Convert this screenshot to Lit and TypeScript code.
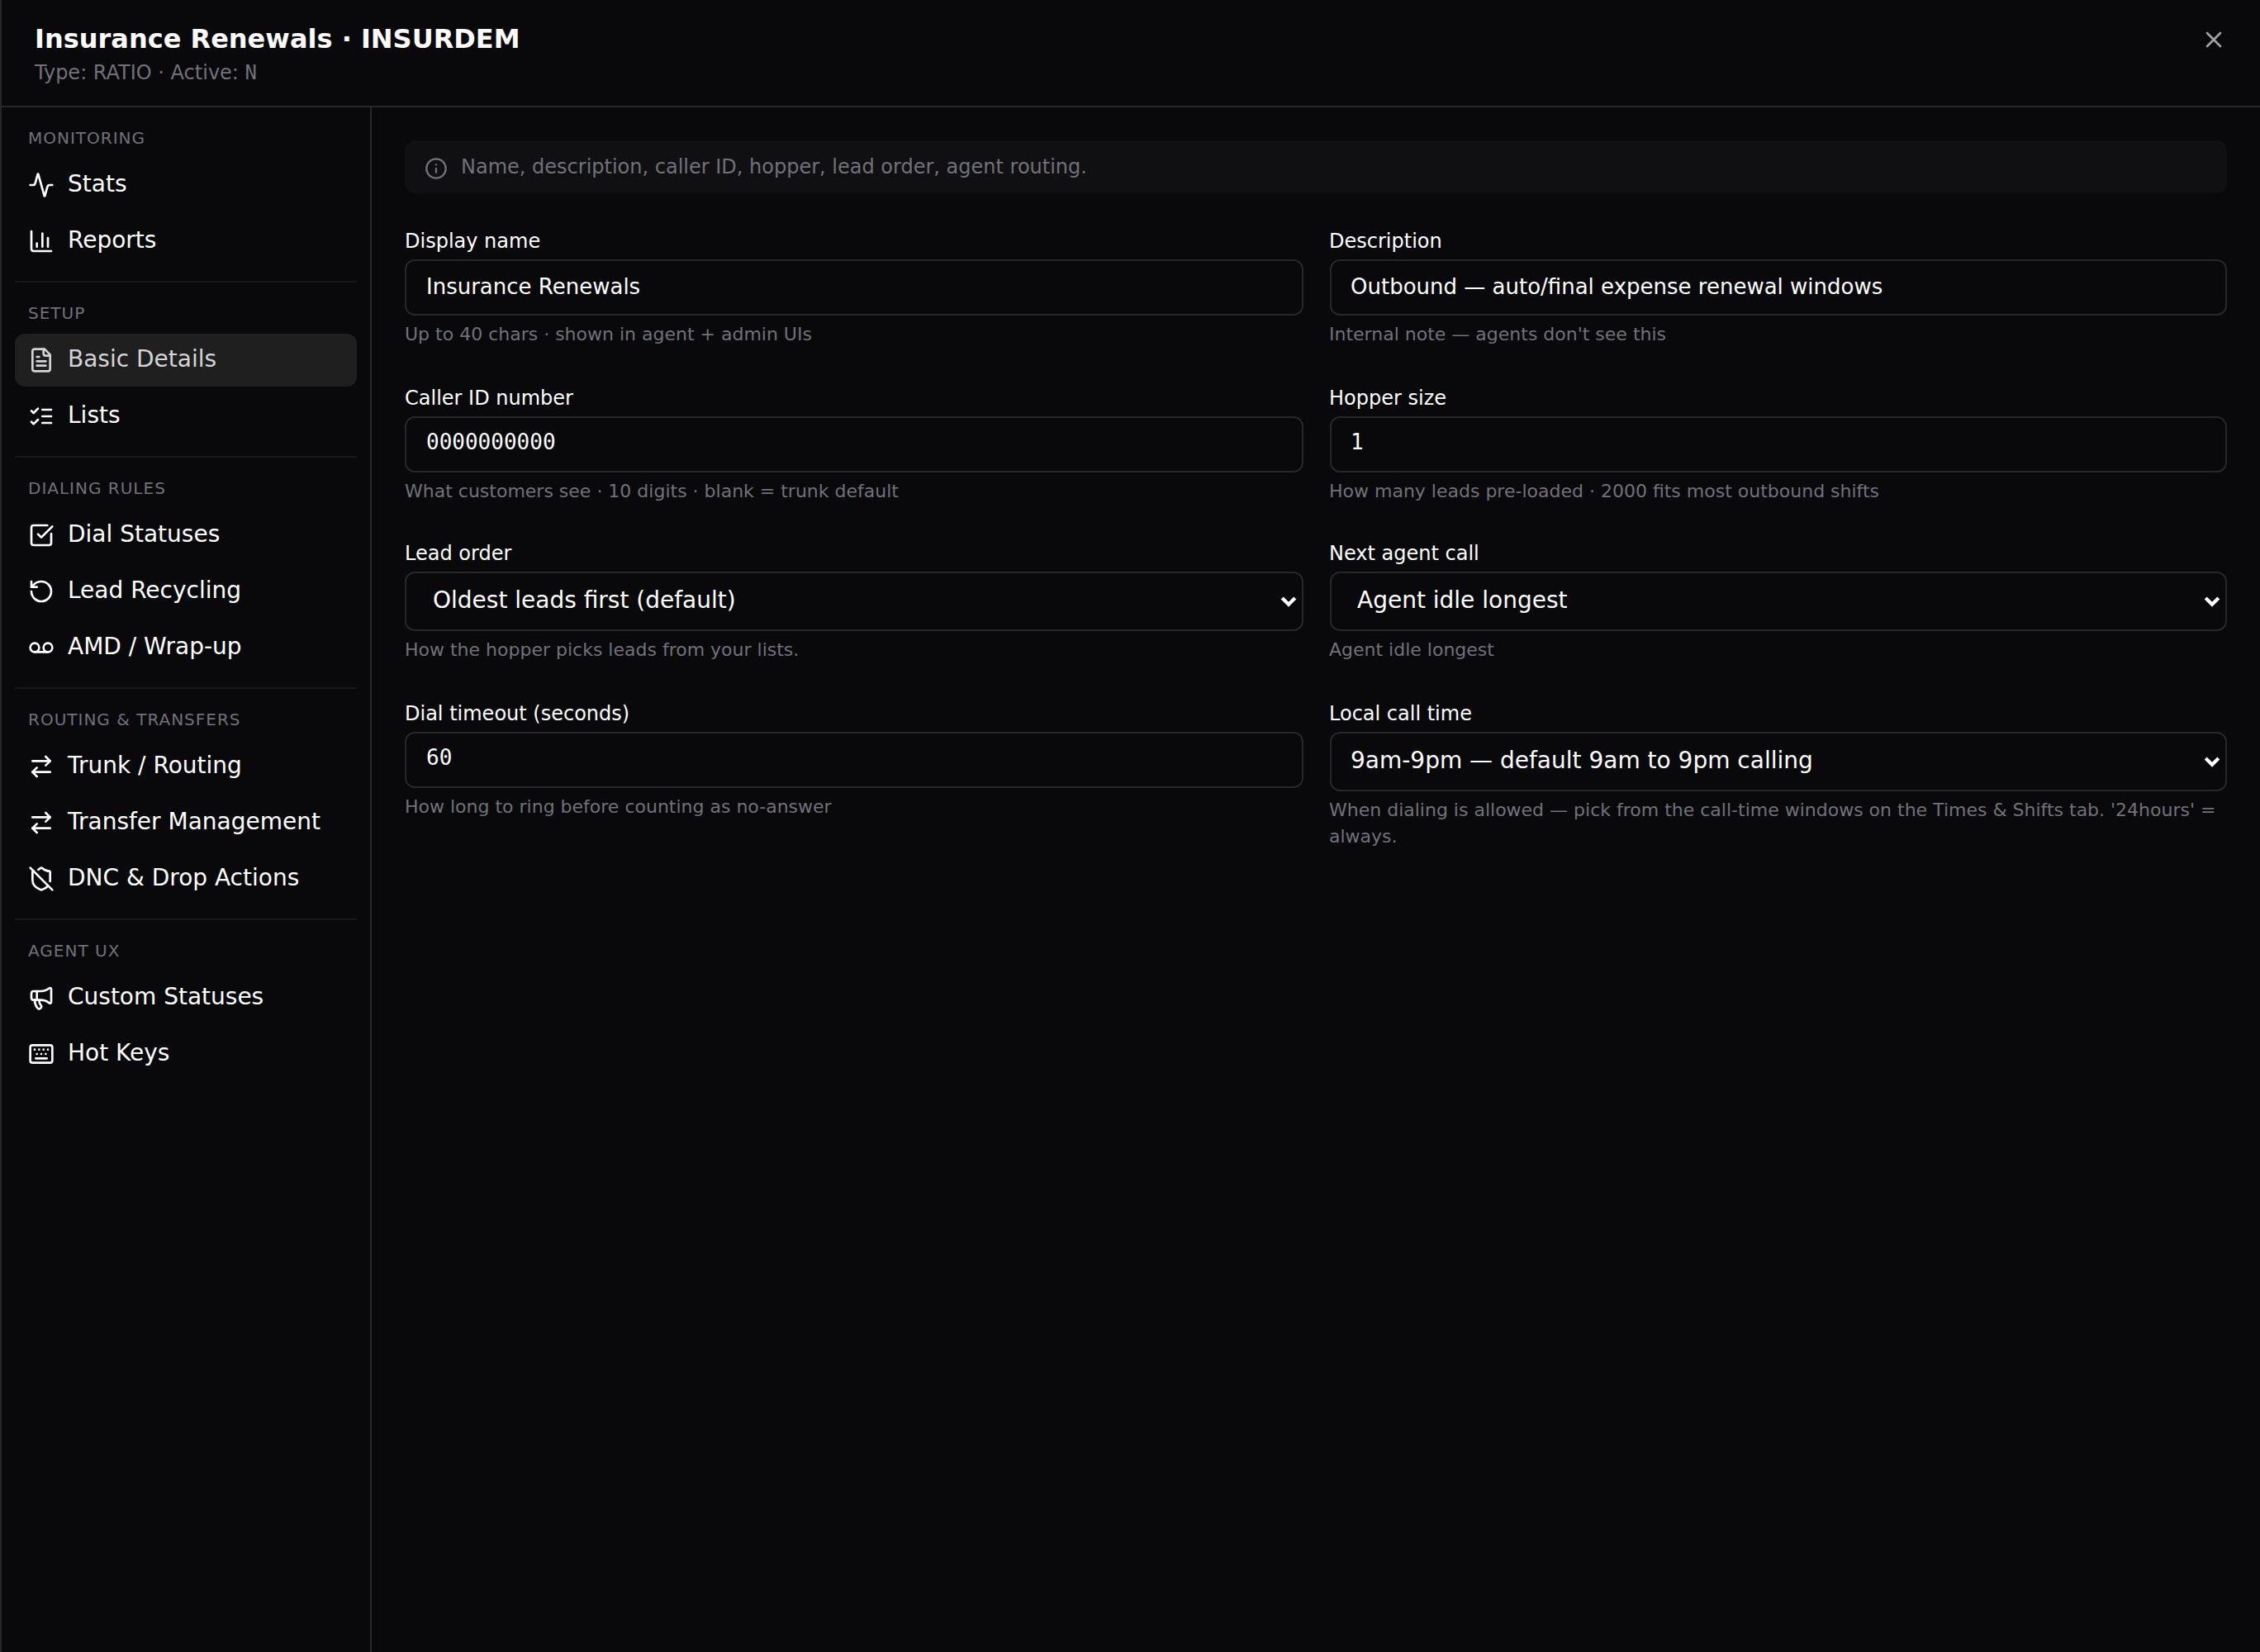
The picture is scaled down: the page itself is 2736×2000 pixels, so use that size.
import { LitElement, html, css, svg, nothing } from "lit";
import { customElement } from "lit/decorators.js";
import { classMap } from "lit/directives/class-map.js";

const icons: Record<string, unknown> = {
  activity: svg`<path d="M22 12h-2.48a2 2 0 0 0-1.93 1.46l-2.35 8.36a.25.25 0 0 1-.48 0L9.24 2.18a.25.25 0 0 0-.48 0l-2.35 8.36A2 2 0 0 1 4.49 12H2"/>`,
  chart: svg`<path d="M3 3v16a2 2 0 0 0 2 2h16"/><path d="M18 17V9"/><path d="M13 17V5"/><path d="M8 17v-3"/>`,
  file: svg`<path d="M15 2H6a2 2 0 0 0-2 2v16a2 2 0 0 0 2 2h12a2 2 0 0 0 2-2V7Z"/><path d="M14 2v4a2 2 0 0 0 2 2h4"/><path d="M10 9H8"/><path d="M16 13H8"/><path d="M16 17H8"/>`,
  list: svg`<path d="m3 17 2 2 4-4"/><path d="m3 7 2 2 4-4"/><path d="M13 6h8"/><path d="M13 12h8"/><path d="M13 18h8"/>`,
  check: svg`<path d="M21 10.5V19a2 2 0 0 1-2 2H5a2 2 0 0 1-2-2V5a2 2 0 0 1 2-2h12.5"/><path d="m9 11 3 3L22 4"/>`,
  rotate: svg`<path d="M3 12a9 9 0 1 0 9-9 9.75 9.75 0 0 0-6.74 2.74L3 8"/><path d="M3 3v5h5"/>`,
  voicemail: svg`<circle cx="6" cy="12" r="4"/><circle cx="18" cy="12" r="4"/><path d="M6 16h12"/>`,
  arrows: svg`<path d="m16 3 4 4-4 4"/><path d="M20 7H4"/><path d="m8 21-4-4 4-4"/><path d="M4 17h16"/>`,
  shieldOff: svg`<path d="m2 2 20 20"/><path d="M5 5a1 1 0 0 0-1 1v7c0 5 3.5 7.5 7.67 8.94a1 1 0 0 0 .67.01c2.35-.82 4.48-1.97 5.9-3.71"/><path d="M9.309 3.652A12.252 12.252 0 0 0 11.24 2.28a1.17 1.17 0 0 1 1.52 0C14.51 3.81 17 5 19 5a1 1 0 0 1 1 1v7a9.784 9.784 0 0 1-.08 1.264"/>`,
  megaphone: svg`<path d="M11 6a13 13 0 0 0 8.4-2.8A1 1 0 0 1 21 4v12a1 1 0 0 1-1.6.8A13 13 0 0 0 11 14H5a2 2 0 0 1-2-2V8a2 2 0 0 1 2-2z"/><path d="M6 14a12 12 0 0 0 2.4 7.2 2 2 0 0 0 3.2-2.4A8 8 0 0 1 10 14"/><path d="M8 6v8"/>`,
  keyboard: svg`<path d="M10 8h.01"/><path d="M12 12h.01"/><path d="M14 8h.01"/><path d="M16 12h.01"/><path d="M18 8h.01"/><path d="M6 8h.01"/><path d="M7 16h10"/><path d="M8 12h.01"/><rect width="20" height="16" x="2" y="4" rx="2"/>`,
  info: svg`<circle cx="12" cy="12" r="10"/><path d="M12 16v-4"/><path d="M12 8h.01"/>`,
  close: svg`<path d="M18 6 6 18"/><path d="m6 6 12 12"/>`,
};

const icon = (name: string, cls = "icon") =>
  html`<svg class=${cls} viewBox="0 0 24 24" fill="none" stroke="currentColor" stroke-width="2" stroke-linecap="round" stroke-linejoin="round">${icons[name]}</svg>`;

const chevron = html`<svg class="chevron" viewBox="0 0 20 14" fill="none" stroke="currentColor" stroke-width="4.2"><path d="m2.2 1.9 7.8 7.8 7.8-7.8"/></svg>`;

interface NavItem { icon: string; label: string; active?: boolean }
interface NavSection { title: string; items: NavItem[] }
interface Field { label: string; value: string; hint: string; mono?: boolean; select?: boolean; inset?: boolean }

const sections: NavSection[] = [
  { title: "Monitoring", items: [{ icon: "activity", label: "Stats" }, { icon: "chart", label: "Reports" }] },
  { title: "Setup", items: [{ icon: "file", label: "Basic Details", active: true }, { icon: "list", label: "Lists" }] },
  {
    title: "Dialing rules",
    items: [
      { icon: "check", label: "Dial Statuses" },
      { icon: "rotate", label: "Lead Recycling" },
      { icon: "voicemail", label: "AMD / Wrap-up" },
    ],
  },
  {
    title: "Routing & transfers",
    items: [
      { icon: "arrows", label: "Trunk / Routing" },
      { icon: "arrows", label: "Transfer Management" },
      { icon: "shieldOff", label: "DNC & Drop Actions" },
    ],
  },
  { title: "Agent UX", items: [{ icon: "megaphone", label: "Custom Statuses" }, { icon: "keyboard", label: "Hot Keys" }] },
];

const fields: Field[] = [
  { label: "Display name", value: "Insurance Renewals", hint: "Up to 40 chars · shown in agent + admin UIs" },
  { label: "Description", value: "Outbound — auto/final expense renewal windows", hint: "Internal note — agents don't see this" },
  { label: "Caller ID number", value: "0000000000", hint: "What customers see · 10 digits · blank = trunk default", mono: true },
  { label: "Hopper size", value: "1", hint: "How many leads pre-loaded · 2000 fits most outbound shifts", mono: true },
  { label: "Lead order", value: "Oldest leads first (default)", hint: "How the hopper picks leads from your lists.", select: true, inset: true },
  { label: "Next agent call", value: "Agent idle longest", hint: "Agent idle longest", select: true, inset: true },
  { label: "Dial timeout (seconds)", value: "60", hint: "How long to ring before counting as no-answer", mono: true },
  {
    label: "Local call time",
    value: "9am-9pm — default 9am to 9pm calling",
    hint: "When dialing is allowed — pick from the call-time windows on the Times & Shifts tab. '24hours' = always.",
    select: true,
  },
];

@customElement("app-root")
export class AppRoot extends LitElement {
  static styles = css`
    :host {
      display: flex;
      flex-direction: column;
      box-sizing: border-box;
      height: 100vh;
      background: #09090b;
      color: #fff;
      border-left: 2px solid #27272a;
      font-family: "DejaVu Sans", sans-serif;
      overflow: hidden;
    }
    * { box-sizing: border-box; }
    .mono { font-family: "DejaVu Sans Mono", monospace; }
    .header {
      display: flex;
      justify-content: space-between;
      align-items: flex-start;
      flex: none;
      height: 130px;
      padding: 24px 40px 0;
      border-bottom: 2px solid #27272a;
    }
    .title { margin: 1px 0 0; font-size: 32px; line-height: 44px; font-weight: 700; color: #fafafa; }
    .subtitle { margin: 1px 0 0; font-size: 24px; line-height: 36px; color: #71717a; }
    .close { display: flex; padding: 8px 0; color: #a1a1a1; }
    .close-icon { width: 32px; height: 32px; }
    .body { display: flex; flex: 1; min-height: 0; }
    .sidebar { flex: none; width: 448px; padding: 0 16px; border-right: 2px solid #27272a; }
    .section { padding: 22px 0 16px; }
    .section + .section { border-top: 2px solid #18181b; }
    .section-title {
      margin: 0 0 10px;
      padding: 0 16px;
      font-size: 20px;
      line-height: 30px;
      font-weight: 400;
      letter-spacing: 1px;
      text-transform: uppercase;
      color: #71717a;
    }
    .items { display: flex; flex-direction: column; gap: 4px; }
    .item {
      display: flex;
      align-items: center;
      gap: 16px;
      height: 64px;
      padding: 0 16px;
      border-radius: 12px;
      font-size: 28px;
      line-height: 33px;
    }
    .item-label { margin-bottom: 3px; }
    .item.active { background: #1f1f1f; color: #d4d4d8; }
    .icon { flex: none; width: 32px; height: 32px; }
    .content { flex: 1; min-width: 0; padding: 40px; }
    .banner {
      display: flex;
      align-items: flex-start;
      gap: 16px;
      height: 64px;
      padding: 12px 24px;
      border-radius: 12px;
      background: #101012;
      color: #71717a;
      font-size: 24px;
      line-height: 40px;
    }
    .banner-icon { width: 28px; height: 28px; margin-top: 8px; }
    .grid {
      display: grid;
      grid-template-columns: 1fr 1fr;
      grid-template-rows: 150px 148px 154px auto;
      gap: 40px 32px;
      margin-top: 40px;
    }
    .field { display: flex; flex-direction: column; min-width: 0; }
    .label { font-size: 24px; line-height: 36px; margin-bottom: 4px; }
    .control {
      display: flex;
      align-items: flex-start;
      flex: none;
      height: 68px;
      padding: 16px 24px 0;
      border: 2px solid #27272a;
      border-radius: 12px;
      font-size: 26px;
      line-height: 30px;
    }
    .control.mono { padding-top: 14px; }
    .control.select { justify-content: space-between; height: 72px; padding-right: 6px; font-size: 28px; line-height: 33px; }
    .control.inset { padding-left: 32px; }
    .field:nth-child(odd) .control { margin-right: -1px; }
    .field:nth-child(even) .control { margin-left: 1px; padding-left: 23px; }
    .field:nth-child(even) .control.inset { padding-left: 31px; }
    .chevron { width: 20px; height: 14px; margin-top: 12px; }
    .hint { margin: 6.5px 0 0; font-size: 22px; line-height: 32px; color: #71717a; }
  `;

  private renderSection(s: NavSection) {
    return html`<section class="section">
      <h2 class="section-title">${s.title}</h2>
      <div class="items">
        ${s.items.map(
          (i) => html`<div class=${classMap({ item: true, active: !!i.active })}>${icon(i.icon)}<span class="item-label">${i.label}</span></div>`,
        )}
      </div>
    </section>`;
  }

  private renderField(f: Field) {
    return html`<div class="field">
      <span class="label">${f.label}</span>
      <div class=${classMap({ control: true, mono: !!f.mono, select: !!f.select, inset: !!f.inset })}>
        <span class="value">${f.value}</span>${f.select ? chevron : nothing}
      </div>
      <p class="hint">${f.hint}</p>
    </div>`;
  }

  render() {
    return html`
      <header class="header">
        <div>
          <h1 class="title">Insurance Renewals · INSURDEM</h1>
          <p class="subtitle">Type: RATIO · Active: <span class="mono">N</span></p>
        </div>
        <div class="close">${icon("close", "close-icon")}</div>
      </header>
      <div class="body">
        <nav class="sidebar">${sections.map((s) => this.renderSection(s))}</nav>
        <main class="content">
          <div class="banner">${icon("info", "banner-icon")}<span>Name, description, caller ID, hopper, lead order, agent routing.</span></div>
          <div class="grid">${fields.map((f) => this.renderField(f))}</div>
        </main>
      </div>
    `;
  }
}
